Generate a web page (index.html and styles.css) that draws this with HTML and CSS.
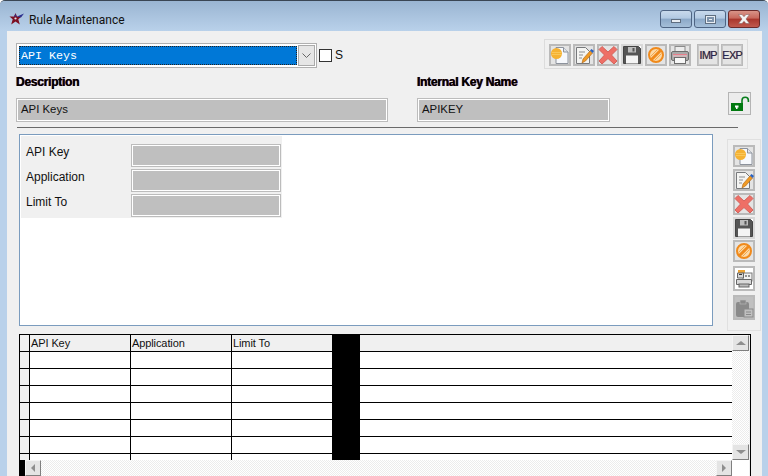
FILE: index.html
```html
<!DOCTYPE html>
<html>
<head>
<meta charset="utf-8">
<title>Rule Maintenance</title>
<link rel="stylesheet" href="styles.css">
</head>
<body>
<svg class="defs" width="0" height="0">
  <defs>
    <symbol id="i-new" viewBox="0 0 22 22">
      <path d="M7 3.500h7.500l4.500 4.500v11.500h-12z" fill="#f6f8fc" stroke="#8c929c"/>
      <path d="M14.500 3.500v4.500h4.500" fill="#dfe4ea" stroke="#8c929c"/>
      <circle cx="7.500" cy="9.500" r="5.500" fill="#f5b233"/>
      <path d="M3 8.500h9M3 10.500h9" stroke="#fbd06a" stroke-width="1" opacity=".7"/>
    </symbol>
    <symbol id="i-edit" viewBox="0 0 22 22">
      <path d="M3.500 3.500h9l4 4v12h-13z" fill="#f4f4f2" stroke="#77797c"/>
      <path d="M6 8h6M6 11h4M6 14h3" stroke="#8b8d90"/>
      <path d="M9 19l1-4 7-8 2.500 2-7 8z" fill="#f09a24" stroke="#a85f12" stroke-width=".6"/>
      <path d="M17 6.500l1.500-1.500 2.500 2-1.500 2z" fill="#2a62c0"/>
    </symbol>
    <symbol id="i-del" viewBox="0 0 22 22">
      <path d="M5 2.500l6 5.500 6-5.500 3 3-5.500 5.500 5.500 6-3 3-6-5.500-6 5.500-3-3 5.500-6-5.500-5.500z" fill="#ee6f66" stroke="#d4635c"/>
    </symbol>
    <symbol id="i-save" viewBox="0 0 22 22">
      <path d="M2.500 2.500h15l2 2v15h-17z" fill="#555" stroke="#444"/>
      <rect x="7" y="3" width="8" height="5.500" fill="#bdbdbd"/>
      <rect x="11.500" y="4" width="2" height="3.500" fill="#555"/>
      <rect x="5" y="11.500" width="12" height="8" fill="#f4f4f4"/>
    </symbol>
    <symbol id="i-cancel" viewBox="0 0 22 22">
      <circle cx="11" cy="11" r="7" fill="#fbd9a8" stroke="#f08a1c" stroke-width="2"/>
      <path d="M6 16l10-10" stroke="#f08a1c" stroke-width="3"/>
      <path d="M5.500 12.500l7-7M9.500 16.500l7-7" stroke="#f5a84a" stroke-width="1"/>
    </symbol>
    <symbol id="i-print" viewBox="0 0 22 22">
      <rect x="6" y="2.500" width="10" height="6" fill="#ececec" stroke="#8a8a8a"/>
      <rect x="2.500" y="7.500" width="17" height="9" rx="1.500" fill="#a9a9a9" stroke="#6d6d6d"/>
      <path d="M4 10.500h14" stroke="#e87f8c"/>
      <path d="M4 12h14" stroke="#f3c4ca"/>
      <rect x="5.500" y="13.500" width="11" height="6" fill="#f7f7f7" stroke="#6d6d6d"/>
    </symbol>
    <symbol id="i-copy" viewBox="0 0 22 25">
      <rect x="2" y="2" width="18" height="21" fill="#fff"/>
      <rect x="5" y="4" width="7" height="6" fill="#eca436"/>
      <rect x="10" y="7" width="9" height="8" fill="#f2f2f2" stroke="#777"/>
      <path d="M4.500 7h6v5h-6zM3.500 13.500h15v5h-15z" fill="#d9d9d9" stroke="#666"/>
      <path d="M12 10h2M15 10h2M6 8.500h3" stroke="#333"/>
      <rect x="6" y="18" width="10" height="3" fill="#bbb" stroke="#666"/>
    </symbol>
    <symbol id="i-paste" viewBox="0 0 22 25">
      <rect x="3" y="7" width="13" height="15" rx="2" fill="#8a8a8a"/>
      <rect x="7" y="5" width="6" height="4" fill="#8a8a8a" stroke="#bdbdbd" stroke-width=".6"/>
      <rect x="11" y="14" width="9" height="8" fill="#c0c0c0" stroke="#8a8a8a"/>
      <path d="M13 17h5M13 19.500h5" stroke="#8a8a8a"/>
    </symbol>
  </defs>
</svg>
<div class="window">
  <header class="titlebar">
    <svg class="logo" width="15" height="12" viewBox="0 0 15 12">
      <path d="M6.500 0l1.500 3.500h4.500l-3.200 2.700 1.500 5.300-4.300-3-4.300 3 1.500-5.300L.5 3.500H5z" fill="#7d0f22"/>
      <path d="M1 3.500h4L6.500 1l1 2.500M8 3.500L15 .500l-3 4" fill="#2b2f8e"/>
      <circle cx="6.500" cy="5.500" r="1.100" fill="#dfe7f2"/>
    </svg>
    <span class="title">Rule Maintenance</span>
    <div class="caption-buttons">
      <div class="cap"><span class="glyph-min"></span></div>
      <div class="cap"><span class="glyph-max"></span></div>
      <div class="cap cap-close">
        <svg width="14" height="10" viewBox="0 0 14 10"><path d="M1.500 .5h3.500l2 2.200L9 .5h3.500L9 5l3.500 4.500H9L7 7.300 5 9.500H1.500L5 5z" fill="#f4f4f4" stroke="#7a5a5a" stroke-width=".5"/></svg>
      </div>
    </div>
  </header>
  <main class="content">
    <div class="top-row">
      <div class="combo">
        <div class="combo-value"><span>API Keys</span></div>
        <div class="combo-btn"><svg width="9" height="6" viewBox="0 0 9 6"><path d="M.5.500l4 4 4-4" fill="none" stroke="#666"/></svg></div>
      </div>
      <div class="check"></div>
      <span class="check-label">S</span>
      <div class="toolbar">
        <button class="tb"><svg width="22" height="22"><use href="#i-new"/></svg></button>
        <button class="tb"><svg width="22" height="22"><use href="#i-edit"/></svg></button>
        <button class="tb"><svg width="22" height="22"><use href="#i-del"/></svg></button>
        <button class="tb tb-save"><svg width="22" height="22"><use href="#i-save"/></svg></button>
        <button class="tb"><svg width="22" height="22"><use href="#i-cancel"/></svg></button>
        <button class="tb"><svg width="22" height="22"><use href="#i-print"/></svg></button>
        <button class="tb tb-text tb-imp">IMP</button>
        <button class="tb tb-text">EXP</button>
      </div>
    </div>
    <div class="meta-row">
      <div class="meta meta-desc">
        <label class="bold">Description</label>
        <div class="field field-desc">API Keys</div>
      </div>
      <div class="meta meta-key">
        <label class="bold">Internal Key Name</label>
        <div class="field field-key">APIKEY</div>
      </div>
      <div class="lock">
        <svg width="21" height="21" viewBox="0 0 21 21"><path d="M13 10V7.500a3.200 3.200 0 0 1 6.400 0V9" fill="none" stroke="#0a7f1e" stroke-width="1.600"/><rect x="2" y="10" width="12" height="8" fill="#00790f"/><rect x="6" y="12.500" width="3.500" height="2" fill="#fff"/><rect x="7" y="13.500" width="1.500" height="2.500" fill="#fff"/></svg>
      </div>
    </div>
    <hr class="rule">
    <div class="mid-row">
      <section class="panel">
        <div class="form">
          <div class="form-row"><span class="form-label">API Key</span><div class="field field-form"></div></div>
          <div class="form-row"><span class="form-label">Application</span><div class="field field-form"></div></div>
          <div class="form-row"><span class="form-label">Limit To</span><div class="field field-form"></div></div>
        </div>
      </section>
      <aside class="sidebar">
        <button class="tb"><svg width="22" height="22"><use href="#i-new"/></svg></button>
        <button class="tb"><svg width="22" height="22"><use href="#i-edit"/></svg></button>
        <button class="tb"><svg width="22" height="22"><use href="#i-del"/></svg></button>
        <button class="tb tb-save"><svg width="22" height="22"><use href="#i-save"/></svg></button>
        <button class="tb tb-cancel"><svg width="22" height="22"><use href="#i-cancel"/></svg></button>
        <button class="tb tb-tall tb-copy"><svg width="22" height="25"><use href="#i-copy"/></svg></button>
        <button class="tb tb-tall tb-paste"><svg width="22" height="25"><use href="#i-paste"/></svg></button>
      </aside>
    </div>
    <section class="grid">
      <div class="grid-main">
        <div class="grid-view">
          <table class="sheet">
            <thead>
              <tr><th class="c-row"></th><th class="c-col">API Key</th><th class="c-col">Application</th><th class="c-col">Limit To</th><th class="c-black"></th><th class="c-rest"></th></tr>
            </thead>
            <tbody>
              <tr><td class="c-row"></td><td></td><td></td><td></td><td class="c-black"></td><td></td></tr>
              <tr><td class="c-row"></td><td></td><td></td><td></td><td class="c-black"></td><td></td></tr>
              <tr><td class="c-row"></td><td></td><td></td><td></td><td class="c-black"></td><td></td></tr>
              <tr><td class="c-row"></td><td></td><td></td><td></td><td class="c-black"></td><td></td></tr>
              <tr><td class="c-row"></td><td></td><td></td><td></td><td class="c-black"></td><td></td></tr>
              <tr><td class="c-row"></td><td></td><td></td><td></td><td class="c-black"></td><td></td></tr>
              <tr><td class="c-row"></td><td></td><td></td><td></td><td class="c-black"></td><td></td></tr>
            </tbody>
          </table>
        </div>
        <div class="vscroll">
          <div class="sbtn"><span class="arrow arrow-up"></span></div>
          <div class="sbtn sbtn-down"><span class="arrow arrow-down"></span></div>
        </div>
      </div>
      <div class="hscroll-row">
        <div class="hscroll-mark"></div>
        <div class="sbtn sbtn-h"><span class="arrow arrow-left"></span></div>
        <div class="hscroll-track"></div>
        <div class="sbtn sbtn-h"><span class="arrow arrow-right"></span></div>
        <div class="corner"></div>
      </div>
    </section>
  </main>
</div>
</body>
</html>
```

FILE: styles.css
```css
* { box-sizing: border-box; }
html, body { margin: 0; padding: 0; background: #fff; }
body { width: 768px; height: 476px; overflow: hidden; font-family: "Liberation Sans", Arial, sans-serif; font-size: 12px; color: #111; }
.defs { display: block; height: 0; }
.window { width: 768px; height: 476px; background: #b9d1ea; border-top: 1px solid #3a4654; border-radius: 5px 5px 0 0; overflow: hidden; }

.titlebar { height: 30px; display: flex; align-items: flex-start; padding: 0 8px 0 9px; background: linear-gradient(#9ab5d2, #b9d1ea); }
.logo { margin-top: 12px; }
.title { margin-left: 5px; margin-top: 12px; font-family: Roboto, "Liberation Sans", sans-serif; font-size: 12px; line-height: 15px; color: #111; }
.caption-buttons { margin-left: auto; margin-top: 9px; display: flex; gap: 2px; }
.cap { width: 32px; height: 18px; border: 1px solid #4e6483; border-radius: 3px; background: linear-gradient(#c8d9ec 0, #b2c9e2 45%, #8ba8c8 50%, #a5bfd9 100%); display: flex; align-items: center; justify-content: center; }
.glyph-min { width: 10px; height: 4px; margin-top: 3px; background: #e8edf3; border: 1px solid #5f6e80; }
.glyph-max { width: 11px; height: 9px; background: #e8edf3; border: 1px solid #5f6e80; box-shadow: inset 0 0 0 1px #e8edf3, inset 0 0 0 3px #7e93ab; }
.cap-close { background: linear-gradient(#d99488 0, #c8685c 45%, #a9362c 50%, #c05a4e 100%); border-color: #6b2a2a; }

.content { margin: 0 6px 0 7px; height: 445px; background: #f0f0f0; padding: 9px 0 0 9px; }

.top-row { display: flex; align-items: flex-start; height: 35px; }
.combo { margin-top: 3px; width: 301px; height: 25px; border: 1px solid #b0b0b0; background: #fff; display: flex; padding: 2px; }
.combo-value { flex: 1; background: #0078d7; border: 1px dotted #d89a28; color: #fff; font-family: "Liberation Mono", monospace; font-size: 11.700px; line-height: 17px; padding-left: 1px; outline: 1px dotted #222; outline-offset: -1px; }
.combo-value span { display: block; margin-top: 1px; }
.combo-btn { width: 17px; margin: -1px -1px -1px 1px; background: #e6e6e6; border: 1px solid #ababab; display: flex; align-items: center; justify-content: center; }
.check { margin: 9px 0 0 2px; width: 13px; height: 13px; background: #fff; border: 1px solid #333; }
.check-label { margin: 8px 0 0 3px; font-size: 12px; line-height: 14px; }

.toolbar { margin-left: 201px; width: 204px; height: 30px; margin-top: -1px; border: 1px solid #dcdcdc; padding: 4px; display: flex; gap: 2px; }
.tb { width: 22px; height: 22px; padding: 0; border: 2px solid #bababa; background: #e4e4e4; display: block; overflow: visible; flex: none; font: inherit; }
.tb svg { display: block; margin: -2px; }
.tb-save { background: #fff; border-color: #d8d8d8; }
.tb-text { border-width: 1px; box-shadow: inset 0 0 0 1px #c6c6c6; font-size: 11px; line-height: 20px; letter-spacing: -.7px; color: #1d2a5c; background: #e4e4e4; text-shadow: .5px 0 0 #b06a30; text-align: center; white-space: nowrap; }
.tb-imp { margin-left: 4px; }

.meta-row { display: flex; align-items: flex-start; height: 47px; }
.meta { display: flex; flex-direction: column; }
.meta-desc { width: 401px; }
.meta-key { width: 311px; }
.bold { height: 16px; line-height: 15px; font-weight: bold; font-size: 12px; letter-spacing: -.25px; text-shadow: .4px 0 0 #a33, -.4px 0 0 #27b; color: #000; }
.field { height: 24px; background: #bfbfbf; border: 1px solid #bcbcbc; box-shadow: inset 0 0 0 1px #fff; padding: 0 3px 0 4px; line-height: 21px; font-size: 11.400px; color: #111; }
.meta .field { margin-top: 7px; }
.field-desc { width: 372px; }
.field-key { width: 193px; }
.lock { margin-top: 17px; width: 23px; height: 23px; border: 1px solid #b4b4b4; background: #ececec; }
.lock svg { display: block; }

.rule { margin: 5px 0 0 1px; width: 721px; height: 1px; border: 0; background: #6a6a6a; }

.mid-row { display: flex; align-items: flex-start; margin-top: 6px; height: 200px; }
.panel { margin-left: 3px; width: 694px; height: 192px; border: 1px solid #7b9cbe; background: #fff; padding: 1px; }
.form { width: 261px; height: 82px; background: #f0f0f0; padding-top: 8px; display: flex; flex-direction: column; gap: 2px; }
.form-row { display: flex; height: 23px; }
.form-label { width: 110px; padding-left: 5px; line-height: 16px; }
.field-form { width: 150px; height: 23px; }

.sidebar { margin: 5px 0 0 14px; width: 34px; height: 192px; border: 1px solid #e0e0e0; padding: 5px 0 0 5px; display: flex; flex-direction: column; gap: 2px; }
.tb-cancel { margin-top: -1px; }
.tb-tall { height: 25px; margin-top: 2px; }
.tb-paste { background: #c0c0c0; }

.grid { margin: 0 0 0 3px; width: 732px; height: 142px; border: 1px solid #000; border-bottom: 0; display: flex; flex-direction: column; background: #f0f0f0; }
.grid-main { display: flex; height: 125px; }
.grid-view { width: 712px; height: 125px; overflow: hidden; background: #fff; }
.sheet { border-collapse: separate; border-spacing: 0; table-layout: fixed; width: 712px; }
.sheet th, .sheet td { padding: 0; height: 17px; border-right: 1px solid #000; border-bottom: 1px solid #000; font-weight: normal; text-align: left; background: #fff; }
.sheet th { background: #f0f0f0; font-size: 11px; line-height: 15px; padding: 1px 0 0 1px; vertical-align: top; letter-spacing: -.1px; }
.sheet td:last-child, .sheet th:last-child { border-right: 0; }
.c-row { width: 10px; }
.sheet th.c-row, .sheet td.c-row { background: #f0f0f0; padding: 0; }
.sheet th.c-col { width: 101px; }
.sheet th.c-black, .sheet td.c-black { width: 27px; background: #000; }

.vscroll { width: 17px; height: 125px; display: flex; flex-direction: column; justify-content: space-between; background: repeating-conic-gradient(#ececec 0 25%, #fff 0 50%) 0 0 / 2px 2px; }
.sbtn { width: 17px; height: 16px; background: #e4e4e4; border: 1px solid; border-color: #f4f4f4 #7f7f7f #7f7f7f #f4f4f4; display: flex; align-items: center; justify-content: center; flex: none; }
.arrow { width: 0; height: 0; border: 4px solid transparent; }
.arrow-up { border-bottom: 4px solid #8e8e8e; border-top: 0; border-left-width: 5px; border-right-width: 5px; }
.arrow-down { border-top: 4px solid #8e8e8e; border-bottom: 0; border-left-width: 5px; border-right-width: 5px; }
.arrow-left { border-right: 4px solid #8e8e8e; border-left: 0; }
.arrow-right { border-left: 4px solid #8e8e8e; border-right: 0; }

.hscroll-row { display: flex; height: 16px; }
.hscroll-mark { width: 5px; background: #000; }
.sbtn-h { width: 16px; height: 16px; }
.hscroll-track { flex: 1; background: repeating-conic-gradient(#ececec 0 25%, #fff 0 50%) 0 0 / 2px 2px; }
.corner { width: 17px; margin-right: 1px; background: #fff; }
```
